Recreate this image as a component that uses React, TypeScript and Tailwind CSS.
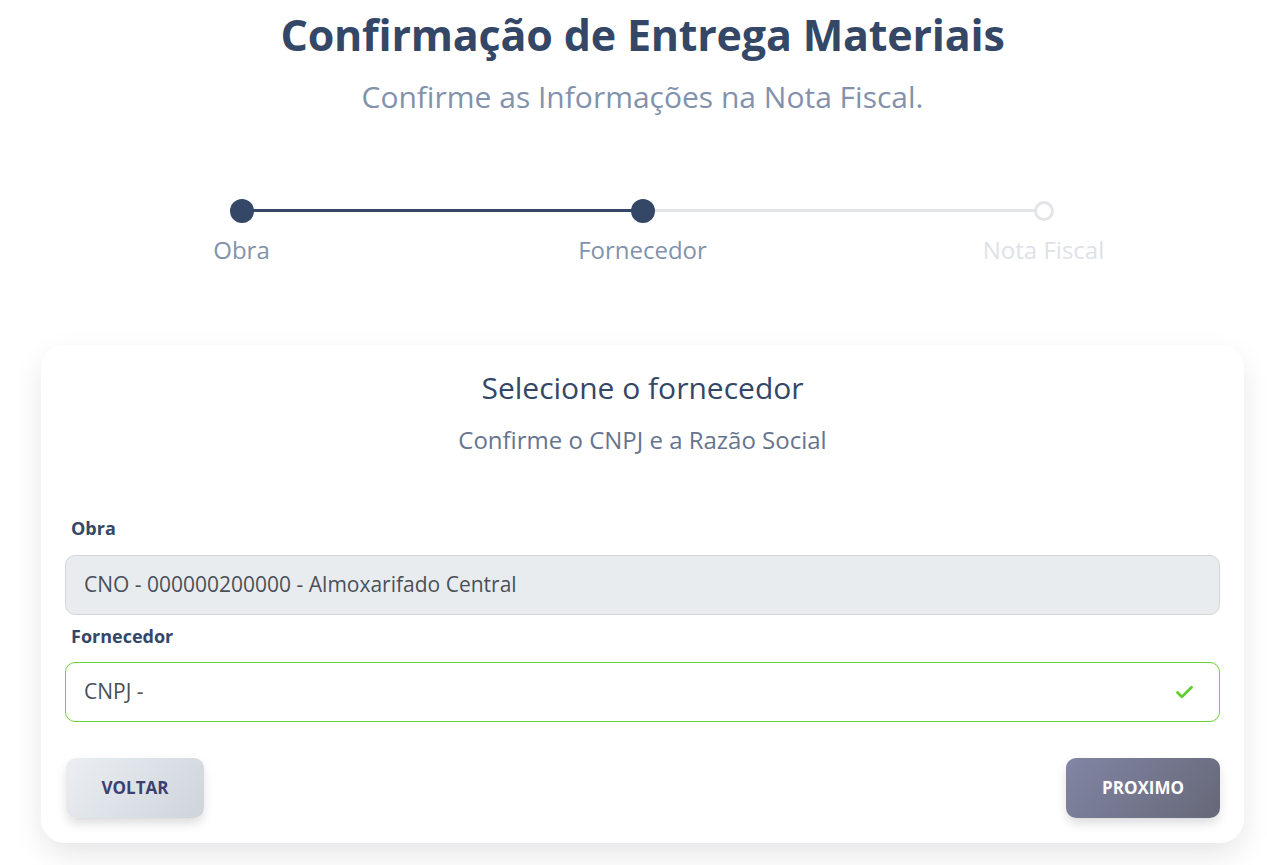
import { Check } from "lucide-react";

const steps = [
  { label: "Obra", state: "done" },
  { label: "Fornecedor", state: "done" },
  { label: "Nota Fiscal", state: "todo" },
];

export default function App() {
  return (
    <div
      className="min-h-[865px] bg-white pl-[41px] pr-[23px] pt-[7px]"
      style={{ fontFamily: '"Open Sans", "Noto Sans", sans-serif' }}
    >
      <div className="text-center">
        <h1 className="text-[43px] leading-[56px] font-bold text-[#344767] tracking-[-0.2px]">
          Confirmação de Entrega Materiais
        </h1>
        <p className="mt-[14px] text-[30px] leading-[40px] text-[#8392ab]">
          Confirme as Informações na Nota Fiscal.
        </p>
      </div>

      {/* stepper */}
      <div className="relative mt-[82px] grid grid-cols-3">
        <div className="absolute left-[16.666%] right-[50%] top-[10px] h-[3px] bg-[#344767]" />
        <div className="absolute left-[50%] right-[16.666%] top-[10px] h-[3px] bg-[#e3e5e9]" />
        {steps.map((s) => (
          <div key={s.label} className="relative flex flex-col items-center">
            <div className="flex h-[24px] items-center justify-center">
              {s.state === "done" ? (
                <div className="h-[24px] w-[24px] rounded-full bg-[#344767]" />
              ) : (
                <div className="h-[20px] w-[20px] rounded-full border-[3px] border-[#e3e5e9] bg-white" />
              )}
            </div>
            <span
              className={
                "mt-[11px] text-[24px] leading-[32px] " +
                (s.state === "done" ? "text-[#8392ab]" : "text-[#dee2e7]")
              }
            >
              {s.label}
            </span>
          </div>
        ))}
      </div>

      {/* card */}
      <div className="mt-[79px] rounded-[24px] bg-white px-[24px] pb-[25px] pt-[23px] shadow-[0_12px_32px_-4px_rgba(20,20,40,0.13)]">
        <div className="text-center">
          <h2 className="text-[30px] leading-[40px] text-[#344767]">
            Selecione o fornecedor
          </h2>
          <p className="mt-[17px] text-[24px] leading-[30px] text-[#67748e]">
            Confirme o CNPJ e a Razão Social
          </p>
        </div>

        <div className="mt-[61px]">
          <label className="ml-[6px] block text-[18px] leading-[24px] font-bold text-[#344767]">
            Obra
          </label>
          <div className="mt-[15px] flex h-[60px] items-center rounded-[10px] border border-[#d2d6da] bg-[#e9ecef] px-[18px] text-[21px] text-[#495057]">
            CNO - 000000200000 - Almoxarifado Central
          </div>
        </div>

        <div className="mt-[9px]">
          <label className="ml-[6px] block text-[18px] leading-[24px] font-bold text-[#344767]">
            Fornecedor
          </label>
          <div className="mt-[14px] flex h-[60px] items-center justify-between rounded-[10px] border border-[#66d432] bg-white pl-[18px] pr-[24px] text-[21px] text-[#495057]">
            <span>CNPJ -</span>
            <Check className="h-[21px] w-[21px] text-[#5fcf2e]" strokeWidth={3.2} />
          </div>
        </div>

        <div className="mt-[36px] flex items-center justify-between">
          <button className="ml-[1px] h-[60px] w-[138px] rounded-[10px] bg-[linear-gradient(310deg,#ced4da,#ebeff4)] text-[17px] font-bold text-[#3a416f] shadow-[0_6px_12px_-2px_rgba(20,20,40,0.18)]">
            VOLTAR
          </button>
          <button className="h-[60px] w-[154px] rounded-[10px] bg-[linear-gradient(310deg,#666878,#8285a4)] text-[17px] font-bold text-white shadow-[0_6px_12px_-2px_rgba(20,20,40,0.18)]">
            PROXIMO
          </button>
        </div>
      </div>
    </div>
  );
}
